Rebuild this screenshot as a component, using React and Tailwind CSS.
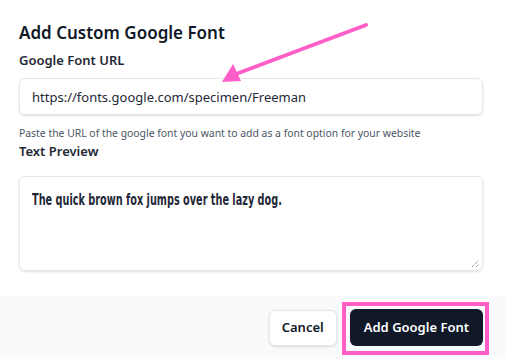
export default function App() {
  return (
    <div className="relative w-[505px] h-[359px] bg-white overflow-hidden font-['Noto_Sans',sans-serif] text-[#111827]">
      <div className="pl-[19px] pr-[22px] pt-[20px]">
        <h2 className="text-[17px] leading-[26px] font-semibold">Add Custom Google Font</h2>
        <label className="block mt-[4px] text-[13px] leading-[20px] font-semibold text-[#1f2937]">Google Font URL</label>
        <input
          readOnly
          value="https://fonts.google.com/specimen/Freeman"
          className="mt-[8px] block w-full h-[37px] rounded-md border border-gray-200 px-[12px] text-[13px] text-[#1f2937] shadow-sm outline-none"
        />
        <p className="mt-[10px] text-[10.4px] leading-[16px] text-gray-600">
          Paste the URL of the google font you want to add as a font option for your website
        </p>
        <label className="block text-[13px] leading-[20px] font-semibold text-[#1f2937]">Text Preview</label>
        <div className="relative mt-[15px] h-[95px] rounded-md border border-gray-200 px-[12px] pt-[10px] shadow-sm">
          <span className="inline-block origin-left scale-x-[0.72] whitespace-nowrap text-[15px] leading-[20px] font-bold text-[#1f2937] font-['DejaVu_Sans_Condensed',sans-serif]">
            The quick brown fox jumps over the lazy dog.
          </span>
          <svg className="absolute right-[2px] bottom-[2px]" width="9" height="9" viewBox="0 0 9 9">
            <line x1="1" y1="8" x2="8" y2="1" stroke="#6b7280" strokeWidth="1" strokeDasharray="1 1" />
            <line x1="5" y1="8" x2="8" y2="5" stroke="#6b7280" strokeWidth="1" strokeDasharray="1 1" />
          </svg>
        </div>
      </div>
      <div className="mt-[25px] h-[63px] bg-[#f9fafb] flex items-center justify-end gap-[13px] pr-[22px]">
        <button className="h-[36px] px-[12px] rounded-md border border-gray-200 bg-white text-[13px] font-semibold text-[#111827] shadow-sm">
          Cancel
        </button>
        <button className="h-[37px] px-[14px] rounded-md bg-[#111827] text-[13px] font-semibold text-white">
          Add Google Font
        </button>
      </div>
      <div className="absolute left-[342px] top-[302px] w-[147px] h-[53px] border-[4px] border-[#ff5ec8]" />
      <svg className="absolute left-0 top-0" width="505" height="359">
        <line x1="366" y1="25" x2="236" y2="74" stroke="#ff5ec8" strokeWidth="4" strokeLinecap="round" />
        <polygon points="222,82 233,64 241,81" fill="#ff5ec8" />
      </svg>
    </div>
  );
}
